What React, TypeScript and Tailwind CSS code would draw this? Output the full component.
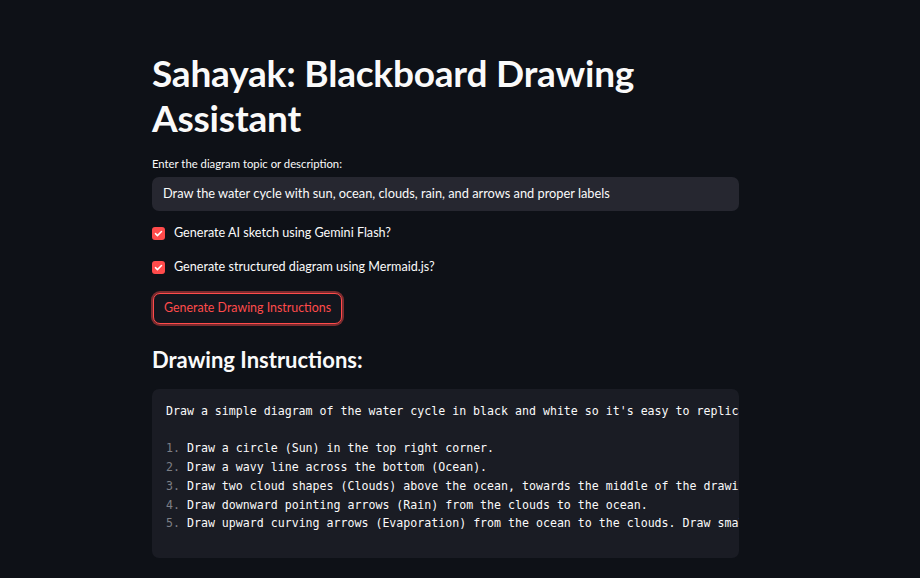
const steps = [
  "Draw a circle (Sun) in the top right corner.",
  "Draw a wavy line across the bottom (Ocean).",
  "Draw two cloud shapes (Clouds) above the ocean, towards the middle of the drawing.",
  "Draw downward pointing arrows (Rain) from the clouds to the ocean.",
  "Draw upward curving arrows (Evaporation) from the ocean to the clouds. Draw small wavy lines.",
];

function Check({ label }: { label: string }) {
  return (
    <label className="flex items-center gap-[9px] h-[20px]">
      <span className="flex items-center justify-center w-[13px] h-[13px] rounded-[3px] bg-[#ff4b4b]">
        <svg viewBox="0 0 12 12" className="w-[9px] h-[9px]">
          <path d="M2 6.2l2.6 2.6L10 3.4" fill="none" stroke="#fff" strokeWidth="2" strokeLinecap="round" strokeLinejoin="round" />
        </svg>
      </span>
      <span className="text-[12.6px] text-[#fafafa]">{label}</span>
    </label>
  );
}

export default function App() {
  return (
    <div className="min-h-screen bg-[#0e1117] font-['Lato',sans-serif] text-[#fafafa]">
      <div className="ml-[152px] w-[587px] pt-[50px]">
        <h1 className="text-[37px] leading-[45px] font-bold tracking-[-0.2px]">
          Sahayak: Blackboard Drawing Assistant
        </h1>
        <p className="mt-[16px] text-[11.3px] leading-[16px]">Enter the diagram topic or description:</p>
        <div className="mt-[5px] h-[34px] rounded-[7px] bg-[#262730] flex items-center px-[11px] text-[12.8px]">
          Draw the water cycle with sun, ocean, clouds, rain, and arrows and proper labels
        </div>
        <div className="mt-[12px] flex flex-col gap-[14px]">
          <Check label="Generate AI sketch using Gemini Flash?" />
          <Check label="Generate structured diagram using Mermaid.js?" />
        </div>
        <button className="mt-[16px] ml-px h-[31px] px-[10px] rounded-[7px] border border-[#ff4b4b] bg-[#13161e] shadow-[0_0_0_2px_rgba(255,75,75,0.45)] text-[12.4px] text-[#ff4b4b]">
          Generate Drawing Instructions
        </button>
        <h2 className="mt-[21px] text-[22px] leading-[30px] font-bold">Drawing Instructions:</h2>
        <div className="mt-[14px] h-[169px] rounded-[7px] bg-[#1a1c24] overflow-hidden pl-[14px] pt-[13px] font-['DejaVu_Sans_Mono',monospace] text-[11.6px] leading-[18.7px] whitespace-pre">
          <div>Draw a simple diagram of the water cycle in black and white so it's easy to replicate on a blackboard.</div>
          <div>&nbsp;</div>
          {steps.map((s, i) => (
            <div key={i}>
              <span className="text-[#7d7f86]">{i + 1}. </span>
              {s}
            </div>
          ))}
        </div>
      </div>
    </div>
  );
}
